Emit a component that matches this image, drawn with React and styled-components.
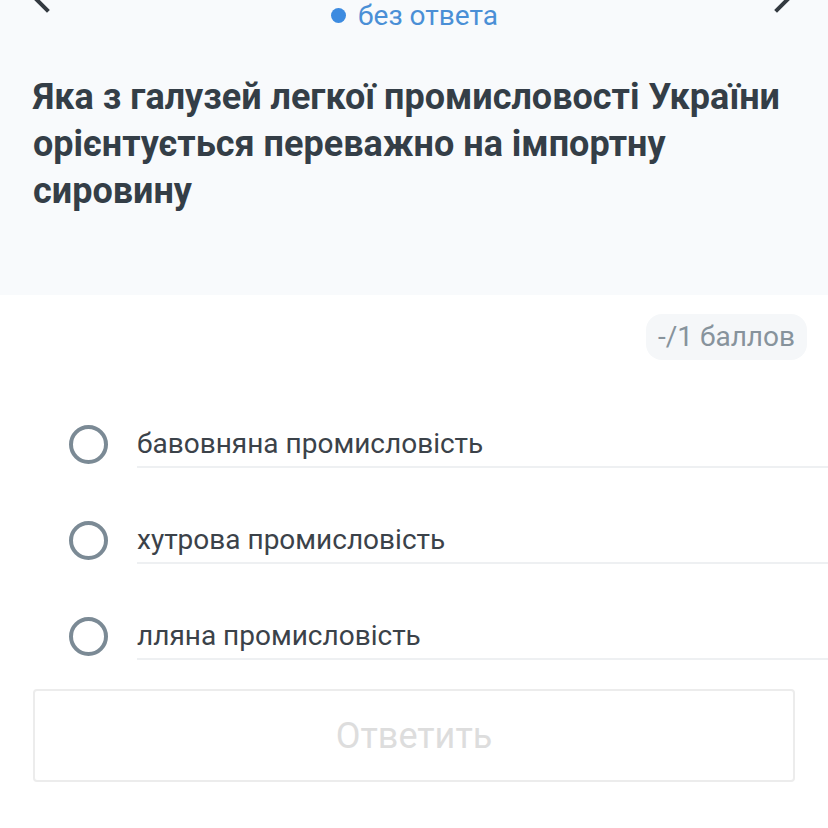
import React from "react";
import styled, { createGlobalStyle } from "styled-components";

const Global = createGlobalStyle`
  html, body { margin: 0; padding: 0; background: #ffffff; }
  body { font-family: Roboto, "Noto Sans", sans-serif; overflow: hidden; }
  * { box-sizing: border-box; }
`;

const Page = styled.div`
  width: 828px;
  height: 828px;
  overflow: hidden;
  background: #ffffff;
`;

const Header = styled.header`
  background: #f8fafc;
  padding: 0 0 80px;
`;

const NavRow = styled.div`
  display: grid;
  grid-template-columns: auto 1fr auto;
  align-items: start;
  margin-top: -22px;
  padding: 0 31px 0 27px;
`;

const Chevron = styled.svg`
  display: block;
  width: 26px;
  height: 36px;
`;

const Status = styled.div`
  margin-top: 22px;
  display: flex;
  align-items: center;
  justify-content: center;
  gap: 12px;
  height: 30px;
  font-size: 28px;
  color: #4a8fd6;
  padding-left: 5px;
`;

const Dot = styled.span`
  width: 15px;
  height: 15px;
  border-radius: 50%;
  background: #3d8be0;
`;

const Question = styled.h1`
  margin: 44px 0 0;
  padding: 0 33px;
  font-size: 36px;
  line-height: 47px;
  font-weight: 700;
  color: #343e47;
  letter-spacing: 0;
`;

const Body = styled.main`
  padding-top: 19px;
`;

const PointsRow = styled.div`
  display: flex;
  justify-content: flex-end;
  padding-right: 21px;
`;

const Points = styled.span`
  height: 46px;
  line-height: 46px;
  padding: 0 12px;
  border-radius: 16px;
  background: #f5f7f9;
  color: #87939c;
  font-size: 28px;
`;

const Options = styled.ul`
  list-style: none;
  margin: 62px 0 0;
  padding: 0;
  display: flex;
  flex-direction: column;
  gap: 50px;
`;

const Option = styled.li`
  display: flex;
  align-items: center;
  padding-left: 69px;
  gap: 29px;
`;

const Radio = styled.span`
  flex: none;
  width: 39px;
  height: 39px;
  border-radius: 50%;
  border: 4px solid #7b8a95;
  margin-bottom: 2px;
`;

const Label = styled.span`
  flex: 1;
  height: 46px;
  line-height: 44px;
  border-bottom: 2px solid #eef0f2;
  font-size: 28px;
  color: #3b4249;
`;

const Submit = styled.button`
  display: block;
  margin: 29px 33px 0;
  width: 762px;
  height: 93px;
  border: 2px solid #ececec;
  border-radius: 4px;
  background: #ffffff;
  color: #dddddd;
  font-family: Roboto, "Noto Sans", sans-serif;
  font-size: 36px;
`;

const options = [
  "бавовняна промисловість",
  "хутрова промисловість",
  "лляна промисловість",
];

export default function App() {
  return (
    <Page>
      <Global />
      <Header>
        <NavRow>
          <Chevron viewBox="0 0 26 36">
            <polyline points="20,4 6,18 20,32" fill="none" stroke="#333a40" strokeWidth="4" strokeLinecap="square" />
          </Chevron>
          <Status>
            <Dot />
            без ответа
          </Status>
          <Chevron viewBox="0 0 26 36">
            <polyline points="6,4 20,18 6,32" fill="none" stroke="#333a40" strokeWidth="4" strokeLinecap="square" />
          </Chevron>
        </NavRow>
        <Question>
          Яка з галузей легкої промисловості України орієнтується переважно на імпортну сировину
        </Question>
      </Header>
      <Body>
        <PointsRow>
          <Points>-/1 баллов</Points>
        </PointsRow>
        <Options>
          {options.map((o) => (
            <Option key={o}>
              <Radio />
              <Label>{o}</Label>
            </Option>
          ))}
        </Options>
        <Submit>Ответить</Submit>
      </Body>
    </Page>
  );
}
